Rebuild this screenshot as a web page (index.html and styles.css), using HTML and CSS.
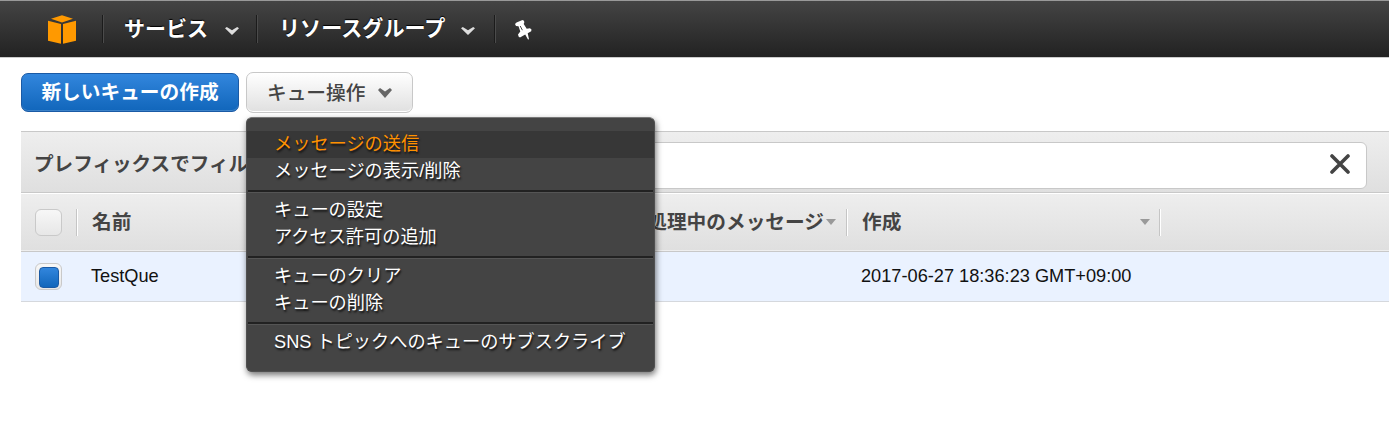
FILE: index.html
```html
<!DOCTYPE html>
<html lang="ja">
<head>
<meta charset="utf-8">
<title>SQS</title>
<link rel="stylesheet" href="styles.css">
</head>
<body>
<header class="topbar">
  <svg class="logo" viewBox="0 0 28 29" width="28" height="29"><path fill="#ff9900" d="M3 3.8 14 .3l11 3.5L14 7.6zM0 5.8l13 3.2v19.7L0 25.8zM28 5.8 15 9v19.7l13-2.9z"/></svg>
  <div class="nav nav-services"><span>サービス</span><svg width="14" height="8" viewBox="0 0 14 8"><path fill="#ddd" d="M0 1.2 1.8 0 7 3.2 12.2 0 14 1.2 7 8z"/></svg></div>
  <div class="nav nav-groups"><span>リソースグループ</span><svg width="14" height="8" viewBox="0 0 14 8"><path fill="#ddd" d="M0 1.2 1.8 0 7 3.2 12.2 0 14 1.2 7 8z"/></svg></div>
  <div class="nav nav-pin"><svg width="17" height="20" viewBox="0 0 17 20"><path fill="#fff" d="M0 4 1.5 2.6 7.5 0 9 .8 9.3 2.5 8.7 4l3 4.8 3.3-.5 1.5 1.2-.3 1.8-3.5 2 1.3 5.9-1 .3-2.8-5-5.2 3-1.3-.8L3 14.5l2.3-3L3.5 6.2 1 6z"/><path stroke="#444" stroke-width="1" d="m5.2 6 2.2 4.2"/></svg></div>
</header>
<main class="page">
  <div class="toolbar">
    <button class="btn btn-primary">新しいキューの作成</button>
    <div class="dropdown">
      <button class="btn btn-menu"><span>キュー操作</span><svg width="14" height="10" viewBox="0 0 14 10"><path fill="#666" d="M0 2 2 0l5 3.6L12 0l2 2-7 8z"/></svg></button>
      <ul class="menu">
        <li class="item active">メッセージの送信</li>
        <li class="item">メッセージの表示/削除</li>
        <li class="sep"></li>
        <li class="item">キューの設定</li>
        <li class="item">アクセス許可の追加</li>
        <li class="sep"></li>
        <li class="item">キューのクリア</li>
        <li class="item">キューの削除</li>
        <li class="sep"></li>
        <li class="item">SNS トピックへのキューのサブスクライブ</li>
      </ul>
    </div>
  </div>
  <section class="panel">
    <div class="filter">
      <span class="filter-label">プレフィックスでフィル</span>
      <div class="filter-input"><svg width="20" height="20" viewBox="0 0 20 20"><path d="M2 2l16 16M18 2 2 18" stroke="#444" stroke-width="3.6" stroke-linecap="round"/></svg></div>
    </div>
    <div class="row head">
      <div class="cell check"><i class="box"></i></div>
      <div class="cell name"><span>名前</span></div>
      <div class="cell inflight"><span>処理中のメッセージ</span><i class="sort"></i></div>
      <div class="cell created"><span>作成</span><i class="sort"></i></div>
    </div>
    <div class="row data">
      <div class="cell check"><i class="box checked"></i></div>
      <div class="cell name">TestQue</div>
      <div class="cell inflight"></div>
      <div class="cell created">2017-06-27 18:36:23 GMT+09:00</div>
    </div>
  </section>
</main>
</body>
</html>
```
FILE: styles.css
```css
* { box-sizing: border-box; }
body {
  min-height: 423px;
  margin: 0;
  background: #fff;
  font-family: "Liberation Sans", "Noto Sans CJK JP", sans-serif;
  font-size: 18px;
}
svg { display: block; flex: none; }
.topbar {
  display: flex;
  align-items: center;
  height: 58px;
  padding-left: 48px;
  border-top: 1px solid #999;
  border-bottom: 1px solid #ccc;
  background: linear-gradient(#444, #222);
}
.logo { margin-right: 26px; }
.nav {
  display: flex;
  align-items: center;
  height: 28px;
  border-left: 1px solid #1b1b1b;
  box-shadow: inset 1px 0 #4b4b4b;
  color: #fff;
  font-size: 21px;
  font-weight: bold;
  text-shadow: 0 -1px 1px #000;
  white-space: nowrap;
}
.nav span { padding-bottom: 4px; }
.nav svg { margin-top: 4px; }
.nav-services { width: 154px; padding-left: 21px; }
.nav-services svg { margin-left: 17px; }
.nav-groups { width: 238px; padding-left: 22px; font-size: 21.1px; }
.nav-groups svg { margin-left: 16px; }
.nav-pin { padding-left: 20px; }
.nav-pin svg { margin-top: 1px; }
.page { padding: 14px 0 0 21px; }
.toolbar { display: flex; gap: 7px; height: 59px; }
.btn {
  border-radius: 7px;
  font-family: inherit;
  font-size: 19.7px;
  white-space: nowrap;
}
.btn-primary {
  width: 218px;
  height: 39px;
  margin-top: 1px;
  padding: 0 0 4px;
  border: 1px solid #1a5aa5;
  background: linear-gradient(#3286dd, #1166bb);
  box-shadow: inset 0 -1px #3c82c8;
  color: #fff;
  font-weight: bold;
}
.dropdown { position: relative; }
.btn-menu {
  display: flex;
  align-items: center;
  width: 167px;
  height: 41px;
  padding: 0 0 0 20px;
  border: 1px solid #c8c8c8;
  background: linear-gradient(#fff, #e0e0e0);
  box-shadow: inset 0 -1px #fff;
  color: #444;
  font-weight: 500;
}
.btn-menu span { padding-bottom: 2px; }
.btn-menu svg { margin-left: 13px; }
.menu {
  position: absolute;
  z-index: 1;
  top: 45px;
  left: 0;
  width: 409px;
  height: 255px;
  margin: 0;
  padding: 13px 0 0;
  border: 1px solid #505050;
  border-top-color: #777;
  border-radius: 6px;
  background: #444;
  box-shadow: 1px 3px 6px rgba(0, 0, 0, .55);
  color: #fff;
  list-style: none;
  text-shadow: 1px 2px 2px #111;
}
.item {
  height: 27px;
  padding-left: 27px;
  font-size: 18.2px;
  line-height: 27px;
  white-space: nowrap;
}
.active { background: #373737; color: #ff9100; }
.sep {
  height: 3px;
  margin: 5px 1px 4px;
  border-bottom: 1px solid #555;
  background: #222;
}
.filter {
  display: flex;
  align-items: center;
  height: 62px;
  padding: 0 22px 0 13px;
  border-top: 1px solid #c8c8c8;
  border-bottom: 1px solid #c8c8c8;
  background: linear-gradient(#eee, #dfdfdf);
}
.filter-label {
  width: 226px;
  color: #444;
  font-size: 19.6px;
  font-weight: bold;
  white-space: nowrap;
}
.filter-input {
  display: flex;
  flex: 1;
  align-items: center;
  justify-content: flex-end;
  height: 47px;
  margin-top: 6px;
  padding-right: 16px;
  border: 1px solid #c8c8c8;
  border-radius: 6px;
  background: #fff;
}
.filter-input svg { margin-bottom: 2px; }
.row { display: flex; align-items: center; }
.head {
  height: 59px;
  border-bottom: 1px solid #c8c8c8;
  background: linear-gradient(#eee, #dfdfdf);
  box-shadow: inset 0 1px #fff, inset 0 -1px #eee;
  color: #444;
  font-size: 19.7px;
  font-weight: bold;
}
.head span { padding-bottom: 4px; }
.data {
  height: 50px;
  border-bottom: 1px solid #d5d8dd;
  background: #eaf2ff;
  color: #111;
  font-size: 18.2px;
}
.cell { display: flex; align-items: center; height: 27px; white-space: nowrap; }
.head .cell { border-right: 1px solid #c5c5c5; box-shadow: 1px 0 #fff; }
.check { width: 56px; padding-left: 14px; }
.name { width: 547px; padding-left: 14px; }
.head .name { padding-left: 15px; border: 0; box-shadow: none; }
.inflight { width: 223px; justify-content: flex-end; padding-right: 10px; }
.inflight .sort { margin-left: 2px; }
.created { width: 313px; padding-left: 14px; }
.head .created { justify-content: space-between; padding: 0 9px 0 15px; }
.box {
  width: 27px;
  height: 27px;
  border: 1px solid #c9c9c9;
  border-radius: 6px;
  background: linear-gradient(#f7f7f7, #e7e7e7);
}
.checked { padding: 3px; }
.checked::before {
  content: "";
  display: block;
  width: 18px;
  height: 19px;
  border: 1px solid #1a5aa5;
  border-radius: 4px;
  background: linear-gradient(#3286dd, #1166bb);
}
.sort {
  width: 10px;
  height: 6px;
  background: #999;
  clip-path: polygon(0 0, 100% 0, 50% 100%);
}
```
